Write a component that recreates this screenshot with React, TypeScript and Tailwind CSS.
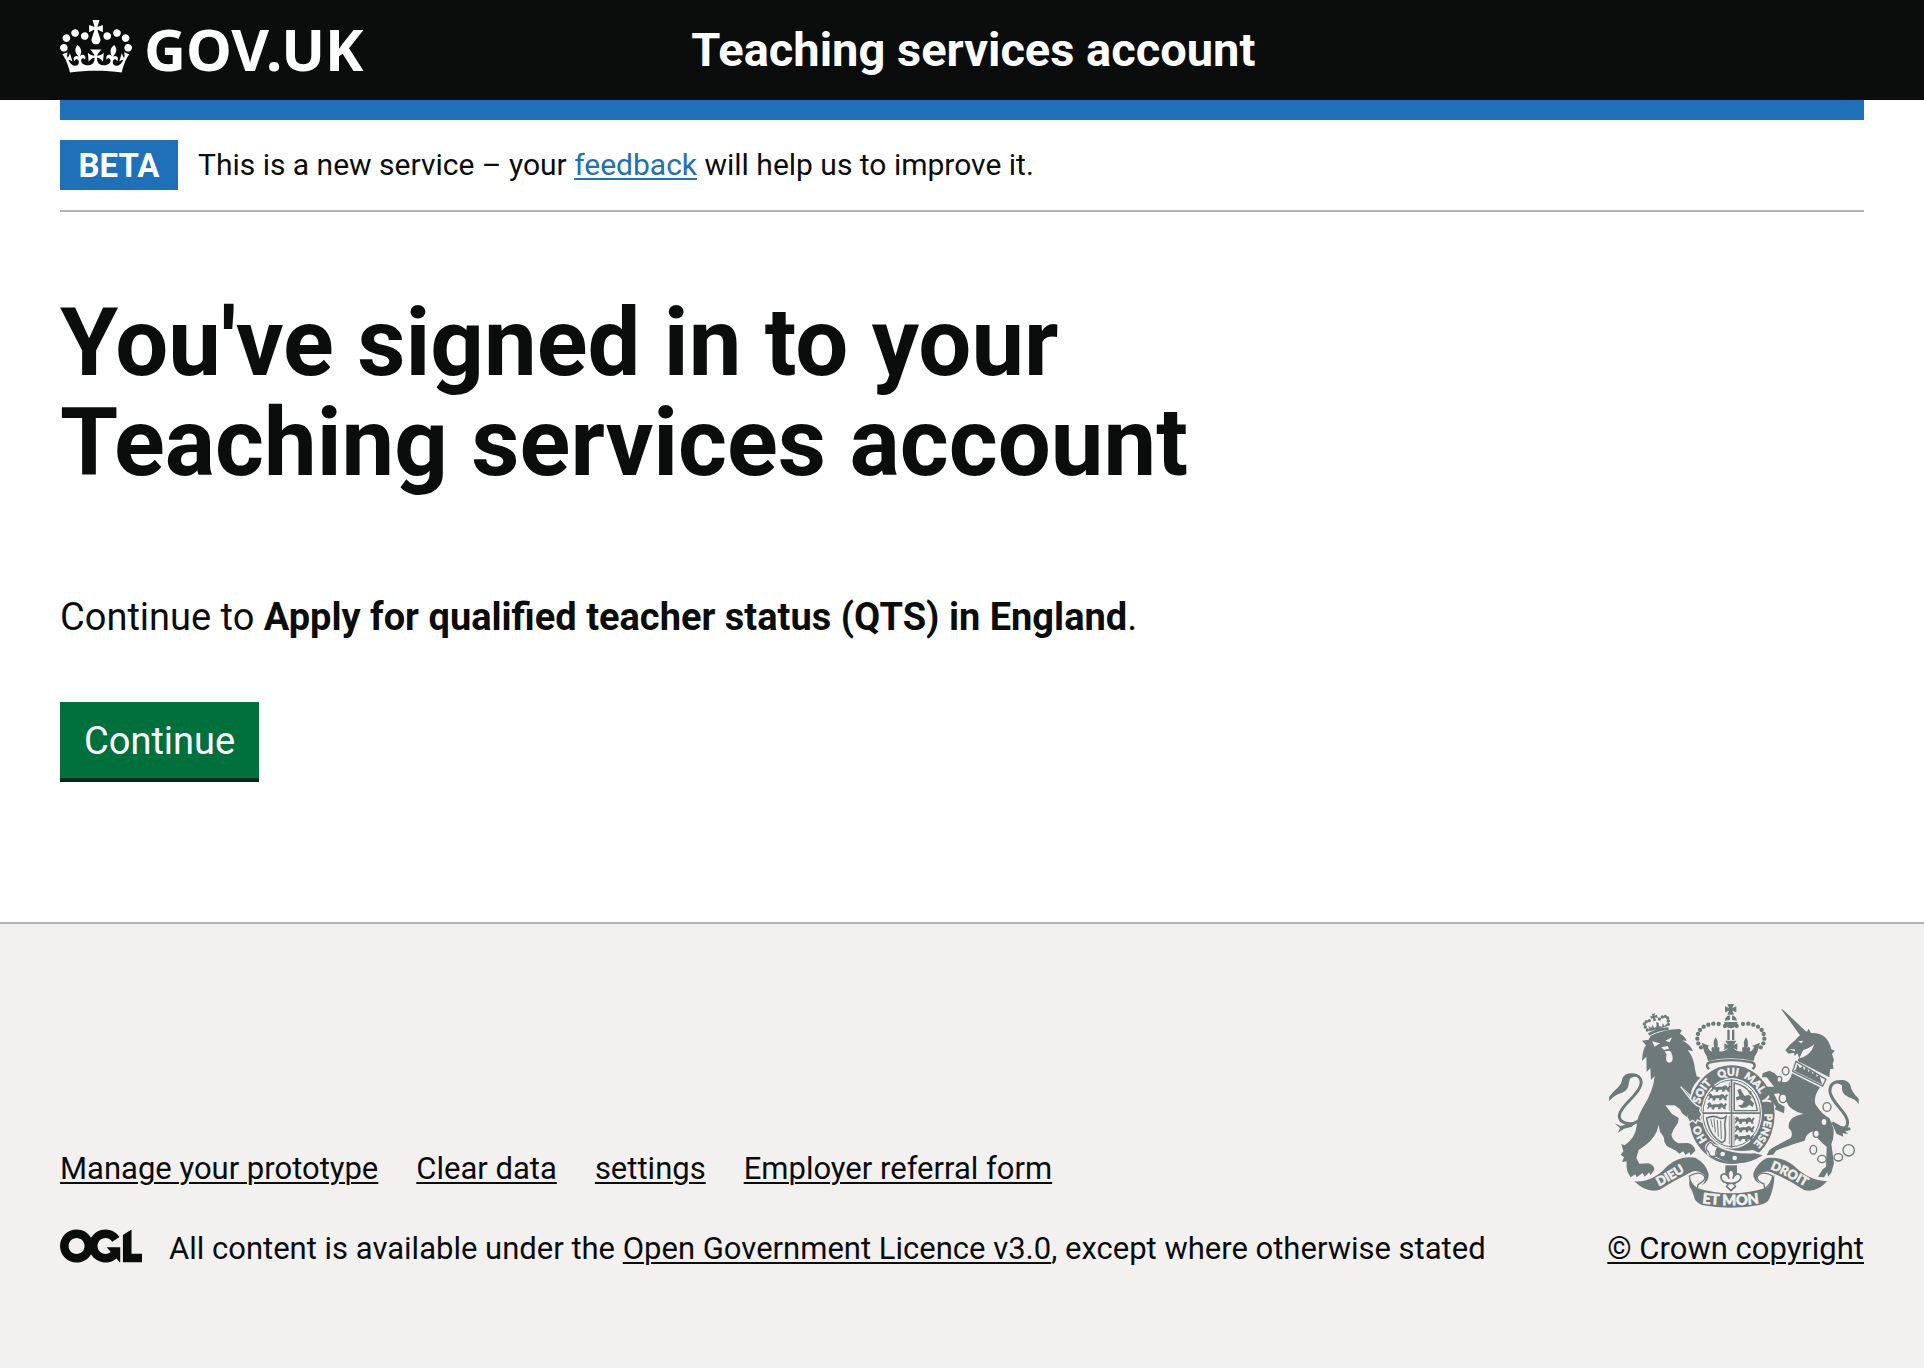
import React from "react";

const paper = "#f2f1ef";
const crownDots = [[387, 108], [368, 102], [352, 101], [337, 104], [323, 110], [312, 120], [306, 132], [304, 146], [307, 160], [315, 172]];
const lionCrownDots = [[154, 120], [148, 111], [145, 102], [151, 95], [160, 92], [190, 87], [199, 81], [208, 79], [215, 84], [217, 93], [217, 103]];
const passantSpots = [[345, 284], [336, 310], [333, 337], [416, 380], [416, 406], [414, 432]];
const passant = "M0 6 L6 0 L12 3 L14 8 L20 6 L34 6 L42 2 L48 4 L50 9 L56 2 L60 6 L55 14 L57 21 L50 21 L48 16 L42 15 L40 21 L33 21 L34 15 L24 15 L20 22 L13 21 L15 16 L8 14 L3 21 L0 18 L4 11 Z";

function Crest() {
  return (
    <svg viewBox="39 42 750 612" className="h-auto w-[250px] text-[#6e797a]" fill="currentColor" aria-hidden="true">
      {/* lion tail */}
      <path d="M128 392C100 412 68 396 70 376C74 344 128 318 135 282C138 262 122 251 104 257" fill="none" stroke="currentColor" strokeWidth="9" />
      <path d="M128 256C105 244 82 250 78 270C74 292 58 294 39 322L40 334C52 314 74 312 88 302C102 292 96 274 104 264Z" />
      <path d="M56 400L74 408L118 396L108 410L84 416L66 428L72 414Z" />
      {/* lion body */}
      <path d="M138 152L158 149L164 137Q205 118 251 117L257 121L252 131Q268 140 272 153L258 151Q282 162 291 184L275 180Q294 202 297 238L302 259L313 263Q292 282 286 303L290 322L256 288Q292 330 301 346L314 352L309 366L316 372L312 396L302 388L299 400L291 391L281 399L280 384Q258 376 252 358L236 346L208 346L228 372L248 384L246 398Q232 416 226 434Q230 452 248 460L276 459Q295 464 298 482L284 496L280 487L268 495L262 484L250 491L240 482L212 468L205 455Q206 440 192 426L188 404Q182 440 148 466L128 480L121 504L130 521L158 520Q176 526 175 540L163 556L160 547L146 560L140 549L122 562L118 553L104 562L98 552Q90 540 92 514L78 516L84 502L74 494L82 484L76 462L86 466Q118 444 122 408Q122 384 141 352Q172 304 176 258L165 270L163 234L152 246L151 200L138 213Q140 176 150 166Z" />
      <path d="M168 154L192 160L176 170ZM208 152L228 142L221 157ZM196 172L215 168L219 176L204 180Z" fill={paper} />
      <ellipse cx="220" cy="204" rx="10" ry="14" fill={paper} />
      <path d="M206 184L222 182L228 192L212 194Z" fill={paper} />
      {/* lion crown */}
      <path d="M156 130Q184 112 217 112L219 119Q184 122 160 137ZM160 124L158 108L166 114L170 104L175 115L182 108L180 97L188 98L189 108L198 110L200 100L206 108L213 101L215 108Z" />
      {lionCrownDots.map(([x, y]) => (
        <circle key={`${x}-${y}`} cx={x} cy={y} r="5" />
      ))}
      <path d="M167 72L178 70L175 77L183 74L185 84L177 82L180 92L172 94L171 84L165 87L163 77L170 79Z" />
      {/* royal crown */}
      <path d="M394 42H414L409 54L421 49V67L409 62L414 74H394L399 62L387 67V49L399 54Z" />
      <path d="M386 92Q388 77 402 76V90ZM408 76Q421 79 423 92L408 90ZM384 96H425Q422 113 404 115Q388 113 384 96ZM394 119H401V150H394ZM408 119H415V150H408Z" />
      {crownDots.map(([x, y]) => (
        <g key={`${x}-${y}`}>
          <circle cx={x} cy={y} r="6.5" />
          <circle cx={809 - x} cy={y} r="6.5" />
        </g>
      ))}
      <path d="M388 152H421L413 166L424 160V180L413 174Q420 186 440 184Q436 172 442 170L445 174Q440 156 450 142Q460 156 454 174L458 170Q466 174 460 184Q470 184 474 170L468 168L492 158L484 186Q474 200 473 213Q404 196 336 213Q334 198 325 186L317 158L341 168L335 170Q340 184 349 184Q343 174 351 170L355 174Q349 156 359 142Q369 156 364 174L367 170Q373 172 369 184Q389 186 396 174L385 180V160L396 166Z" />
      <path d="M339 238Q324 221 346 216Q404 205 463 216Q485 221 470 238" fill="none" stroke="currentColor" strokeWidth="7" />
      {/* garter */}
      <ellipse cx="407" cy="374" rx="134" ry="153" fill={paper} />
      <ellipse cx="407" cy="374" rx="129" ry="148" />
      <ellipse cx="407" cy="370" rx="91" ry="106" fill={paper} />
      <ellipse cx="407" cy="370" rx="86" ry="100" fill="none" stroke="currentColor" strokeWidth="3" />
      <path d="M404 268H409V474H404ZM318 367H494V372H318Z" />
      <path d="M400 276V362M414 276V362M400 378V462M414 378V466" stroke="currentColor" strokeWidth="2" />
      <path d="M415 279Q474 292 484 362H415Z" fill="none" stroke="currentColor" strokeWidth="4" />
      <path d="M424 300L434 296L438 306L446 318L458 314L468 322L462 328L474 340L470 352L460 344L452 352L436 354L426 346L438 344L444 334L432 328L422 332L420 322L430 318Z" />
      <path d="M466 304L460 308L466 314" fill="none" stroke="currentColor" strokeWidth="4" />
      {passantSpots.map(([x, y]) => (
        <path key={`${x}-${y}`} d={passant} transform={`translate(${x} ${y})`} />
      ))}
      {/* harp */}
      <path d="M332 384Q352 374 370 384Q380 388 390 380L386 402Q390 440 386 452L378 458Q340 438 332 384Z" fill="none" stroke="currentColor" strokeWidth="5" />
      <path d="M344 386L350 412M354 386L358 428M364 390L367 440M374 392L376 448" stroke="currentColor" strokeWidth="3" />
      {/* buckle and strap end */}
      <path d="M330 462Q344 446 354 462L370 466Q410 490 470 480L504 494Q440 540 352 500Q330 500 332 486Q322 474 330 462Z" fill={paper} />
      <path d="M364 470Q412 494 476 490L500 496Q430 542 360 500Z" />
      <path d="M334 466Q344 450 352 466L366 472Q356 484 360 498Q340 504 338 486Q326 478 334 466Z" fill="none" stroke="currentColor" strokeWidth="4" />
      <circle cx="380" cy="492" r="7" fill={paper} />
      <circle cx="416" cy="504" r="7" fill={paper} />
      {/* lion forepaw over the garter */}
      <path d="M254 290L290 336L302 346L315 352L311 362L318 372L313 382L317 396L304 390L300 400L290 391L280 398L276 386" stroke={paper} strokeWidth="4" />
      {/* belt motto */}
      <path id="belt" d="M407 489A99 116 0 0 1 407 257A99 116 0 0 1 407 489" fill="none" />
      <g fill={paper} stroke={paper} strokeWidth="1.5" fontFamily="Lato, sans-serif" fontWeight="900" fontSize="32" textAnchor="middle">
        <text><textPath href="#belt" startOffset="16.5%">HO</textPath></text>
        <text><textPath href="#belt" startOffset="35%">SOIT</textPath></text>
        <text><textPath href="#belt" startOffset="48.5%">QUI</textPath></text>
        <text><textPath href="#belt" startOffset="60.5%">MAL</textPath></text>
        <text><textPath href="#belt" startOffset="69%">Y</textPath></text>
        <text><textPath href="#belt" startOffset="82%">PENSE</textPath></text>
      </g>
      {/* unicorn tail */}
      <path d="M742 282C718 268 700 282 702 306C706 340 762 372 754 404C748 424 728 410 708 398" fill="none" stroke="currentColor" strokeWidth="9" />
      <path d="M716 274Q754 262 764 288Q766 306 788 326V342Q776 326 758 322Q734 312 738 286Z" />
      <path d="M704 392Q722 418 762 412L764 420L748 424L756 432L740 430L742 440L722 432Z" />
      {/* unicorn */}
      <path d="M555 57L561 59L634 128L613 137Z" />
      <path d="M634 124L638 116L645 129Q694 126 706 178L716 182L708 192L714 210L710 222L713 236L702 238L700 262L606 214L606 206Q644 200 655 162Q640 176 622 180L610 205L604 190L596 198L594 188L578 191L568 181L580 166L598 150Q612 132 634 124Z" />
      <path d="M606 154L622 152L616 160ZM578 178L596 178L598 184Z" fill={paper} />
      <path d="M600 214L690 268L680 288L590 244Z" fill={paper} stroke="currentColor" strokeWidth="4" />
      <path d="M600 238L604 222L612 234L620 228L624 240L632 230L638 246L644 238L650 252L658 244L662 260L670 254L676 276L680 284L594 242Z" />
      <path d="M588 250L672 292Q652 320 658 342Q676 372 700 384L712 414Q716 440 706 462L714 520L706 548L696 560L694 546L684 562L666 560L680 538L690 530L692 470Q664 450 652 424Q630 430 626 452Q590 462 560 474L540 482L532 494L512 496L520 480L532 472L584 444Q594 428 578 414Q576 384 606 376L622 372Q580 360 572 336L548 310L534 312L548 340L566 350L564 370L550 364L536 358L540 350L524 330L510 290L534 290L512 262L498 262L500 250L520 242L536 250L560 276Q580 282 588 250Z" />
      <g fill={paper} stroke="currentColor" strokeWidth="4">
        <ellipse cx="569" cy="243" rx="10" ry="12" />
        <ellipse cx="550" cy="268" rx="7" ry="9" />
        <ellipse cx="561" cy="325" rx="11" ry="13" />
        <ellipse cx="693" cy="351" rx="12" ry="13" />
        <ellipse cx="684" cy="396" rx="9" ry="11" />
        <ellipse cx="661" cy="431" rx="9" ry="11" />
        <ellipse cx="652" cy="479" rx="10" ry="13" />
        <ellipse cx="678" cy="507" rx="13" ry="11" />
        <ellipse cx="727" cy="502" rx="13" ry="11" />
        <circle cx="758" cy="481" r="17" />
      </g>
      {/* badge at the foot */}
      <path d="M388 526H423V552H388Z" />
      <path d="M405 536Q420 552 410 566Q420 544 434 556Q438 568 424 576L412 580L418 590L405 602L392 590L398 580L384 576Q372 568 376 556Q390 544 400 566Q390 552 405 536Z" fill={paper} stroke="currentColor" strokeWidth="5" />
      <path d="M390 580H420" stroke="currentColor" strokeWidth="5" />
      {/* ribbon */}
      <path d="M296 592Q404 628 516 592Q524 570 535 554Q536 590 520 626Q514 640 490 645Q404 662 318 645Q296 638 293 616Q290 604 281 590Q276 570 286 560Q290 580 296 592Z" />
      <path d="M115 574Q170 578 214 528Q250 496 298 503Q330 520 338 552Q340 574 318 586Q336 566 322 552Q300 536 282 548Q236 570 190 600Q150 610 115 574Z" />
      <path d="M280 558Q312 540 326 560Q330 570 306 584L304 596Q282 582 280 558Z" fill={paper} stroke="currentColor" strokeWidth="4" />
      <path d="M693 574Q638 572 592 526Q556 498 512 504Q482 520 472 550Q470 570 492 582Q476 566 486 554Q510 538 528 548Q580 570 624 600Q662 610 693 574Z" />
      <path d="M530 558Q500 540 484 560Q482 574 504 582L506 596Q528 580 530 558Z" fill={paper} stroke="currentColor" strokeWidth="4" />
      <path id="dieu" d="M172 598Q238 566 292 528" fill="none" />
      <path id="etmon" d="M306 638Q404 654 502 638" fill="none" />
      <path id="droit" d="M516 534Q580 560 640 598" fill="none" />
      <g fill={paper} stroke={paper} strokeWidth="1.5" fontFamily="Lato, sans-serif" fontWeight="900" textAnchor="middle">
        <text fontSize="38"><textPath href="#dieu" startOffset="46%">DIEU</textPath></text>
        <text fontSize="44"><textPath href="#etmon" startOffset="50%">ET MON</textPath></text>
        <text fontSize="38"><textPath href="#droit" startOffset="47%">DROIT</textPath></text>
      </g>
    </svg>
  );
}

function Crown() {
  return (
    <svg viewBox="0 0 132 97" className="h-[53px] w-[72px] shrink-0" fill="currentColor" fillRule="evenodd" aria-hidden="true">
      <path d="M25 30.2c3.5 1.5 7.7-.2 9.1-3.7 1.5-3.6-.2-7.8-3.9-9.2-3.6-1.4-7.6.3-9.1 3.9-1.4 3.5.3 7.5 3.9 9zM9 39.5c3.6 1.5 7.8-.2 9.2-3.7 1.5-3.6-.2-7.8-3.9-9.1-3.6-1.5-7.6.2-9.1 3.8-1.4 3.5.3 7.5 3.8 9zM4.4 57.2c3.5 1.5 7.7-.2 9.1-3.8 1.5-3.6-.2-7.7-3.9-9.1-3.5-1.5-7.6.3-9.1 3.8-1.4 3.5.3 7.6 3.9 9.1zm38.3-21.4c3.5 1.5 7.7-.2 9.1-3.8 1.5-3.6-.2-7.7-3.9-9.1-3.6-1.5-7.6.3-9.1 3.8-1.3 3.6.4 7.7 3.9 9.1zm64.4-5.6c-3.6 1.5-7.8-.2-9.1-3.7-1.5-3.6.2-7.8 3.8-9.2 3.6-1.4 7.7.3 9.2 3.9 1.3 3.5-.4 7.5-3.9 9zm15.9 9.3c-3.6 1.5-7.7-.2-9.1-3.7-1.5-3.6.2-7.8 3.7-9.1 3.6-1.5 7.7.2 9.2 3.8 1.5 3.5-.3 7.5-3.8 9zm4.7 17.7c-3.6 1.5-7.8-.2-9.2-3.8-1.5-3.6.2-7.7 3.9-9.1 3.6-1.5 7.7.3 9.2 3.8 1.3 3.5-.4 7.6-3.9 9.1zM89.3 35.8c-3.6 1.5-7.8-.2-9.2-3.8-1.4-3.6.2-7.7 3.9-9.1 3.6-1.5 7.7.3 9.2 3.8 1.4 3.6-.3 7.7-3.9 9.1zM69.7 17.7l8.9 4.7V9.3l-8.9 2.8c-.2-.3-.5-.6-.9-.9L72.4 0H59.6l3.5 11.2c-.3.3-.6.5-.9.9l-8.8-2.8v13.1l8.8-4.7c.3.3.6.7.9.9l-5 15.4v.1c-.2.8-.4 1.6-.4 2.4 0 4.1 3.1 7.5 7 8.1h.2c.3 0 .7.1 1 .1.4 0 .7 0 1-.1h.2c4-.6 7.1-4.1 7.1-8.1 0-.8-.1-1.7-.4-2.4V34l-5.1-15.4c.4-.2.7-.6 1-.9zM66 92.8c16.9 0 32.8 1.1 47.1 3.2 4-16.9 8.9-26.7 14-33.5l-9.6-3.4c1 4.9 1.1 7.2 0 10.2-1.5-1.4-3-4.3-4.2-8.7L108.6 76c2.8-2 5-3.2 7.5-3.3-4.4 9.4-10 11.9-13.6 11.2-4.3-.8-6.3-4.6-5.6-7.9 1-4.7 5.7-5.9 8-.5 4.3-8.7-3-11.4-7.6-8.8 7.1-7.2 7.9-13.5 2.1-21.1-8 6.1-8.1 12.3-4.5 20.8-4.7-5.4-12.1-2.5-9.5 6.2 3.4-5.2 7.9-2 7.2 3.1-.6 4.3-6.4 7.8-13.5 7.2-10.3-.9-10.9-8-11.2-13.8 2.5-.5 7.1 1.8 11 7.3L80.2 60c-4.1 4.4-8 5.3-12.3 5.4 1.4-4.4 8-11.6 8-11.6H55.5s6.4 7.2 7.9 11.6c-4.2-.1-8-1-12.3-5.4l1.4 16.4c3.9-5.5 8.5-7.7 10.9-7.3-.3 5.8-.9 12.8-11.1 13.8-7.2.6-12.9-2.9-13.5-7.2-.7-5 3.8-8.3 7.1-3.1 2.7-8.7-4.6-11.6-9.4-6.2 3.7-8.5 3.6-14.7-4.6-20.8-5.8 7.6-5 13.9 2.2 21.1-4.7-2.6-11.9.1-7.7 8.8 2.3-5.5 7.1-4.2 8.1.5.7 3.3-1.3 7.1-5.7 7.9-3.5.7-9-1.8-13.5-11.2 2.5.1 4.7 1.3 7.5 3.3l-4.7-15.4c-1.2 4.4-2.7 7.2-4.3 8.7-1.1-3-.9-5.3 0-10.2l-9.5 3.4c5 6.9 9.9 16.7 14 33.5 14.8-2.1 30.8-3.2 47.7-3.2z" />
    </svg>
  );
}

function OpenLicenceLogo() {
  return (
    <svg viewBox="0 0 483.2 195.7" className="h-[34px] w-[82px] shrink-0" fill="currentColor" role="img" aria-label="OGL">
      <path d="M421.5 142.8V.1l-50.7 32.3v161.1h112.4v-50.7zm-122.3-9.6A47.12 47.12 0 0 1 221 97.8c0-26 21.1-47.1 47.1-47.1 16.7 0 31.4 8.7 39.7 21.8l42.7-27.2A97.63 97.63 0 0 0 268.1 0c-36.5 0-68.3 20.1-85.1 49.7A98 98 0 0 0 97.8 0C43.9 0 0 43.9 0 97.8s43.9 97.8 97.8 97.8c36.5 0 68.3-20.1 85.1-49.7a97.76 97.76 0 0 0 149.6 25.4l19.4 22.2h3v-87.8h-80l24.3 27.5zM97.8 145c-26 0-47.1-21.1-47.1-47.1s21.1-47.1 47.1-47.1 47.1 21.1 47.1 47.1S123.8 145 97.8 145" />
    </svg>
  );
}

const footerLinks = ["Manage your prototype", "Clear data", "settings", "Employer referral form"];
const link = "underline decoration-2 underline-offset-[3px]";

export default function App() {
  return (
    <div className="flex min-h-screen flex-col bg-white font-['Roboto',sans-serif] text-[#0b0c0c]">
      <header className="bg-[#0b0c0c] text-white">
        <div className="mx-[60px] flex h-[100px] items-center">
          <a href="#" className="flex w-1/3 items-start gap-3" aria-label="GOV.UK">
            <Crown />
            <span className="pb-0.5 font-['Noto_Sans',sans-serif] text-[58px] leading-none font-bold">GOV.UK</span>
          </a>
          <a href="#" className="pl-[30px] text-[47px] leading-[60px] font-bold">Teaching services account</a>
        </div>
      </header>
      <div className="mx-[60px]">
        <div className="h-5 bg-[#1e70b8]" />
        <div className="flex items-center gap-5 border-b-2 border-[#b1b4b6] py-5">
          <strong className="flex h-[50px] w-[118px] items-center justify-center bg-[#1e70b8] text-[33px] leading-none text-white">BETA</strong>
          <p className="text-[30px] leading-[50px]">
            This is a new service – your{" "}
            <a href="#" className={`${link} text-[#1e70b8]`}>feedback</a> will help us to improve it.
          </p>
        </div>
      </div>
      <main className="mx-[60px] pt-[81px] pb-[140px]">
        <h1 className="w-2/3 text-[94px] leading-[100px] font-bold">You've signed in to your Teaching services account</h1>
        <p className="mt-[99px] text-[38px] leading-[50px]">
          Continue to <strong className="font-bold">Apply for qualified teacher status (QTS) in England</strong>.
        </p>
        <button type="button" className="mt-[60px] block border-b-4 border-[#002d18] bg-[#00703c] px-6 pt-0.5 text-[38px] leading-[74px] text-white">
          Continue
        </button>
      </main>
      <footer className="grow border-t-2 border-[#b1b4b6] bg-[#f2f1ef] text-[31px] leading-10">
        <div className="mx-[60px] flex items-end justify-between pt-20 pb-[99px]">
          <div>
            <ul className="flex gap-[38px]">
              {footerLinks.map((label) => (
                <li key={label}>
                  <a href="#" className={link}>{label}</a>
                </li>
              ))}
            </ul>
            <div className="mt-10 flex items-start gap-[27px]">
              <OpenLicenceLogo />
              <p>
                All content is available under the{" "}
                <a href="#" className={link}>Open Government Licence v3.0</a>, except where otherwise stated
              </p>
            </div>
          </div>
          <a href="#" className={`${link} flex w-[261px] flex-col gap-[21px]`}>
            <span className="self-center"><Crest /></span>
            <span className="self-end">© Crown copyright</span>
          </a>
        </div>
      </footer>
    </div>
  );
}
